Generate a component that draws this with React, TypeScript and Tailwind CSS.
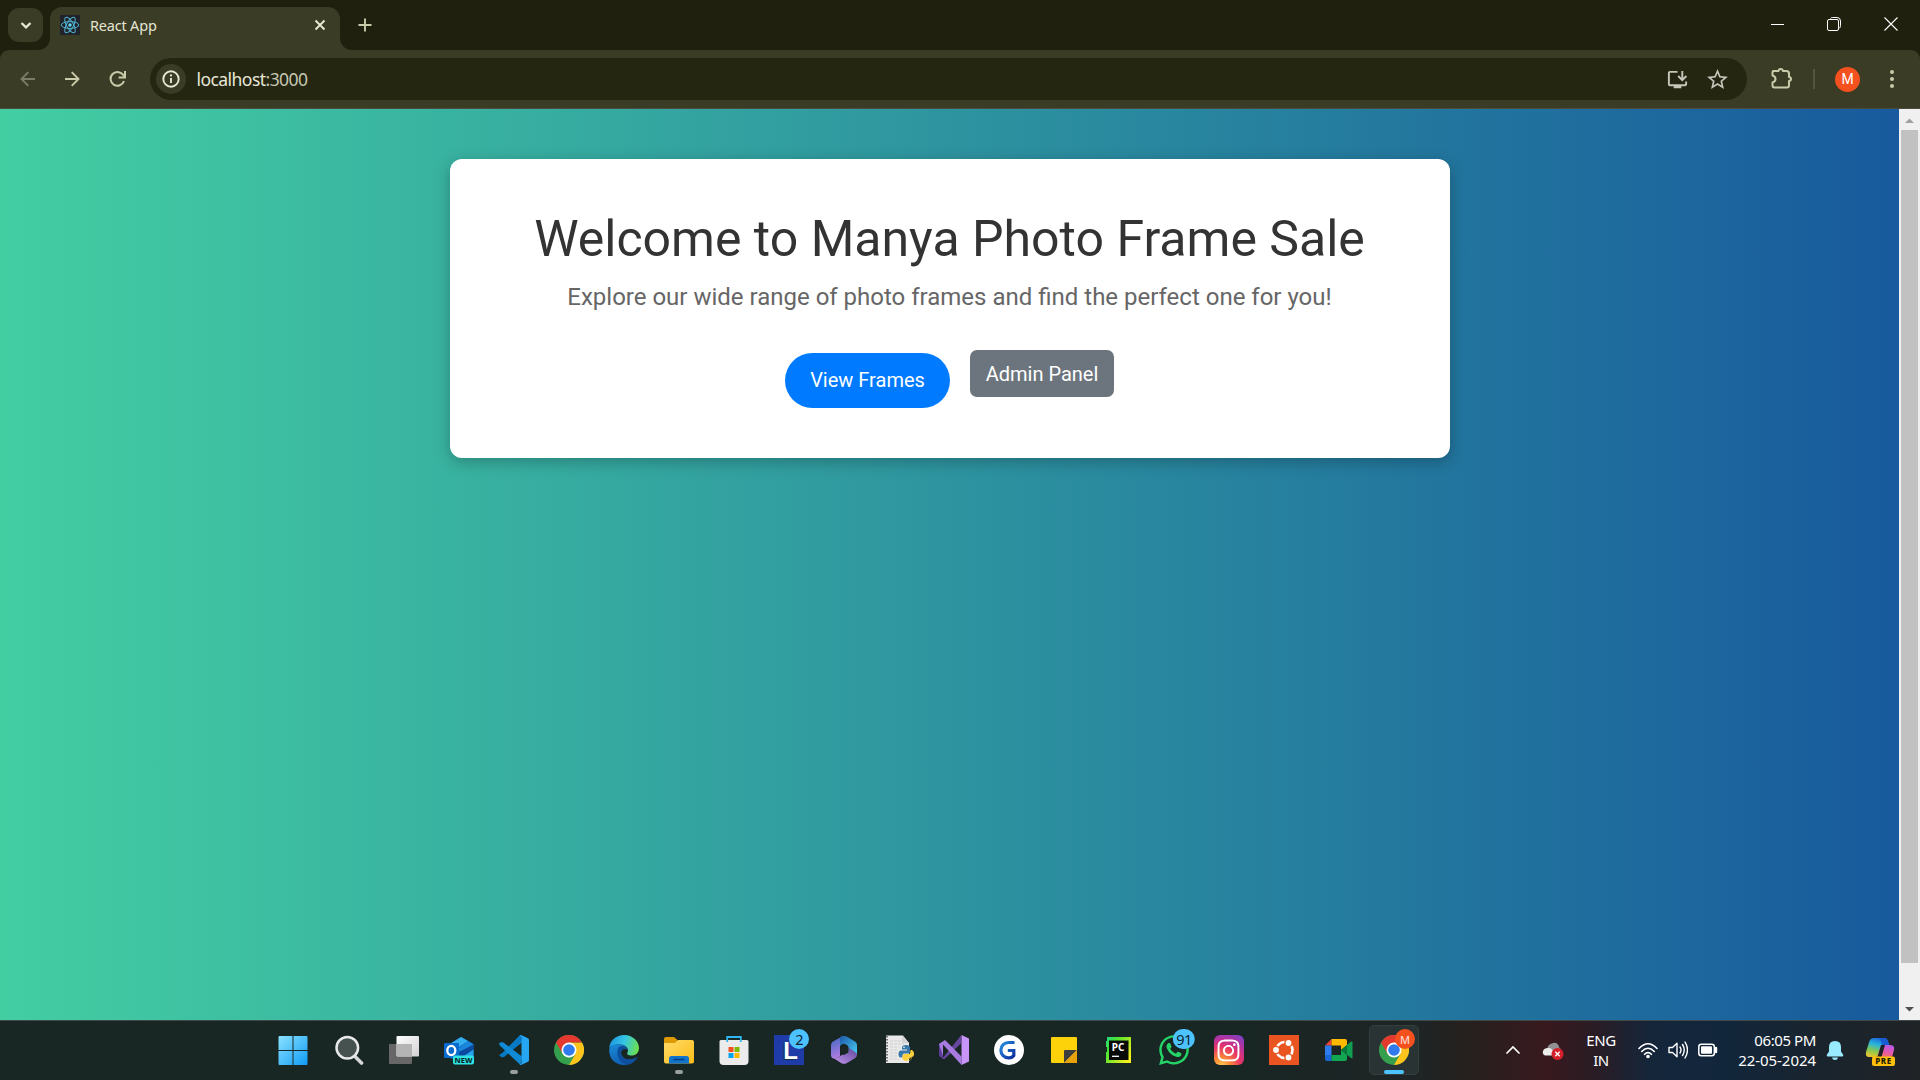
import type { ReactNode } from "react";
import { FaWhatsapp, FaInstagram } from "react-icons/fa";
import { MdOutlineInstallDesktop, MdStarOutline } from "react-icons/md";

const UI = "font-['Noto_Sans','Open_Sans',sans-serif]";

function Svg({ children, size = 30, className = "" }: { children: ReactNode; size?: number; className?: string }) {
  return (
    <svg width={size} height={size} viewBox={`0 0 ${size} ${size}`} fill="none" className={`block shrink-0 ${className}`}>
      {children}
    </svg>
  );
}

function ReactLogo() {
  return (
    <Svg size={20} className="rounded-[1px]">
      <rect width="20" height="20" fill="#20232a" />
      <circle cx="10" cy="10" r="1.7" fill="#61dafb" />
      <g stroke="#4fb3cf" strokeWidth="1">
        <ellipse cx="10" cy="10" rx="8.8" ry="3.4" />
        <ellipse cx="10" cy="10" rx="8.8" ry="3.4" transform="rotate(60 10 10)" />
        <ellipse cx="10" cy="10" rx="8.8" ry="3.4" transform="rotate(120 10 10)" />
      </g>
    </Svg>
  );
}

function TabStrip() {
  return (
    <div className="flex h-[50px] items-start bg-[#1f200e]">
      <div className="mt-2 ml-2 flex h-[34px] w-[35px] items-center justify-center rounded-[11px] bg-[#3b3c26]">
        <Svg size={12}>
          <path d="M1.500 4 L6 8.400 L10.500 4" stroke="#e8e8d6" strokeWidth="2.2" />
        </Svg>
      </div>
      <div className="relative mt-[7px] ml-[7px] flex h-[43px] w-[290px] items-center rounded-t-[12px] bg-[#3b3c26] pr-[14px] pb-[7px] pl-[10px]">
        <svg width="12" height="12" className="absolute bottom-0 -left-3 block"><path d="M12 0 V12 H0 A12 12 0 0 0 12 0Z" fill="#3b3c26" /></svg>
        <svg width="12" height="12" className="absolute -right-3 bottom-0 block"><path d="M0 0 V12 H12 A12 12 0 0 1 0 0Z" fill="#3b3c26" /></svg>
        <ReactLogo />
        <span className={`${UI} mt-[2px] ml-[10px] text-[14.5px] tracking-[-0.2px] text-[#e4e4d3]`}>React App</span>
        <Svg size={12} className="ml-auto">
          <path d="M1.500 1.500 L10.500 10.500 M10.500 1.500 L1.500 10.500" stroke="#e8e8d6" strokeWidth="1.9" />
        </Svg>
      </div>
      <Svg size={14} className="mt-[18px] ml-[18px]">
        <path d="M7 .5 V13.500 M.5 7 H13.500" stroke="#c9cbaa" strokeWidth="1.9" />
      </Svg>
      <div className="mt-[17px] ml-auto flex items-center">
        <Svg size={14}><path d="M0 7.500 H13" stroke="#fff" strokeWidth="1" /></Svg>
        <Svg size={14} className="ml-[42px]">
          <path d="M3.500 1.500 Q4 .5 5.500 .5 H10 Q13.500 .5 13.500 4 V8.500 Q13.500 10.500 12 11.500" stroke="#fff" />
          <rect x=".5" y="2.500" width="11" height="11" rx="1.500" stroke="#fff" />
        </Svg>
        <Svg size={14} className="mr-[22px] ml-[43px]"><path d="M.5 .5 L13.500 13.500 M13.500 .5 L.5 13.500" stroke="#fff" strokeWidth="1.1" /></Svg>
      </div>
    </div>
  );
}

function Toolbar() {
  return (
    <div className="bg-[#1f200e]">
      <div className="flex h-[59px] items-center rounded-t-[9px] border-b border-[#4c4b3d] bg-[#3b3c26]">
        <Svg size={16} className="ml-5"><path d="M15 8 H1.500 M8.300 1.200 L1.500 8 L8.300 14.800" stroke="#7b7c69" strokeWidth="1.9" /></Svg>
        <Svg size={16} className="ml-[28px]"><path d="M1 8 H14.500 M7.700 1.200 L14.500 8 L7.700 14.800" stroke="#c9cbaa" strokeWidth="1.9" /></Svg>
        <Svg size={18} className="ml-[29px]">
          <path d="M15 11 A6.900 6.900 0 1 1 14 4.700 L15.600 6.600" stroke="#c9cbaa" strokeWidth="2" />
          <path d="M16 1 V7.400 H9.600" stroke="#c9cbaa" strokeWidth="2" />
        </Svg>
        <div className="ml-[23px] flex h-[42px] w-[1597px] items-center rounded-full bg-[#252612] pl-[6px]">
          <div className="flex size-[30px] items-center justify-center rounded-full bg-[#3b3c26]">
            <Svg size={18}>
              <circle cx="9" cy="9" r="7.700" stroke="#e8e8d6" strokeWidth="1.900" />
              <path d="M9 8 V13" stroke="#e8e8d6" strokeWidth="1.900" />
              <circle cx="9" cy="5.400" r="1.100" fill="#e8e8d6" />
            </Svg>
          </div>
          <span className={`${UI} mt-px ml-[10.500px] text-[17.5px] tracking-[-0.55px] text-[#e8e8d6]`}>
            localhost<span className="text-[#c6c7b2]">:3000</span>
          </span>
          <MdOutlineInstallDesktop className="ml-auto text-[#c6c6ba]" size={23} />
          <MdStarOutline className="mr-[17px] ml-[16px] text-[#c6c6ba]" size={25} />
        </div>
        <Svg size={24} className="ml-[23px]">
          <path d="M3.500 5 H9 Q9.200 3 11.200 3 Q13.200 3 13.400 5 H17 Q19.500 5 19.500 7.500 V11 Q21.500 11.200 21.500 13 Q21.500 14.800 19.500 15 V19 Q19.500 21.500 17.500 21.500 H5 Q3 21.500 3 19.500 V16.500 Q6 15.700 6 13 Q6 10.500 3 9.500 V6.500 Q3 5 4.500 5Z" stroke="#c9cbaa" strokeWidth="2" strokeLinejoin="round" transform="translate(-.5 -1)" />
        </Svg>
        <div className="ml-[19px] h-[20px] w-[2px] bg-[#55563e]" />
        <div className="ml-[20px] flex size-[25px] items-center justify-center rounded-full bg-[#f4511e] font-[Roboto,sans-serif] text-[14px] text-white">M</div>
        <div className="ml-[30px] flex flex-col gap-[3px]">
          <i className="size-1 rounded-full bg-[#c9cbaa]" />
          <i className="size-1 rounded-full bg-[#c9cbaa]" />
          <i className="size-1 rounded-full bg-[#c9cbaa]" />
        </div>
      </div>
    </div>
  );
}

function Page() {
  return (
    <div className="flex min-h-0 flex-1">
      <main className="flex flex-1 items-start justify-center bg-[linear-gradient(to_right,#43cea2,#185a9d)] pt-[50px] font-[Roboto,sans-serif]">
        <section className="flex h-[299px] w-[1000px] flex-col items-center rounded-[12px] bg-white pt-[50px] shadow-[0_4px_16px_rgba(0,0,0,0.25)]">
          <h1 className="text-[50px] leading-[60px] font-normal whitespace-nowrap text-[#333]">Welcome to Manya Photo Frame Sale</h1>
          <p className="mt-[10px] text-[24px] leading-[36px] whitespace-nowrap text-[#666]">Explore our wide range of photo frames and find the perfect one for you!</p>
          <div className="mt-[35px] flex items-start gap-5 text-[20px] text-white">
            <button className="mt-[3px] h-[55px] w-[165px] rounded-[28px] bg-[#007bff] pb-px whitespace-nowrap">View Frames</button>
            <button className="h-[47px] w-[144px] rounded-[7px] bg-[#6c757d] whitespace-nowrap">Admin Panel</button>
          </div>
        </section>
      </main>
      <div className="flex w-[21px] flex-col items-center bg-[#f0f0f0]">
        <svg width="21" height="21" className="block"><path d="M6 14 L10.500 9.500 L15 14Z" fill="#a0a0a0" /></svg>
        <div className="h-[833px] w-[17px] bg-[#c1c1c1]" />
        <svg width="21" height="21" className="mt-auto block"><path d="M6 8 L10.500 12.500 L15 8Z" fill="#505050" /></svg>
      </div>
    </div>
  );
}

function ChromeIcon() {
  return (
    <Svg>
      <circle cx="15" cy="15" r="15" fill="#34a04d" />
      <path d="M28 7.500 A15 15 0 0 1 15 30 L21.500 18.700 L15 7.500Z" fill="#fcc41c" />
      <path d="M2 7.500 L8.600 18.700 L15 15 V7.500 H28 A15 15 0 0 0 2 7.500" fill="#e5392f" />
      <circle cx="15" cy="15" r="7.500" fill="#fff" />
      <circle cx="15" cy="15" r="5.800" fill="#2f7bee" />
    </Svg>
  );
}

const icons: { name: string; art: ReactNode; badge?: string; running?: boolean; active?: boolean }[] = [
  {
    name: "Start",
    art: (
      <Svg className="relative -left-[1px]">
        <defs><linearGradient id="win" x1="0" y1="0" x2="1" y2="1"><stop stopColor="#8be2ff" /><stop offset="1" stopColor="#0f9bf5" /></linearGradient></defs>
        <path d="M.5 2 Q.5 1 1.500 1 H14.500 V15 H.5Z M15.500 1 H28.500 Q29.500 1 29.500 2 V15 H15.500Z M.5 16 H14.500 V30 H1.500 Q.5 30 .5 29Z M15.500 16 H29.500 V29 Q29.500 30 28.500 30 H15.500Z" fill="url(#win)" />
      </Svg>
    ),
  },
  {
    name: "Search",
    art: (
      <Svg>
        <path d="M20.500 21 L27.500 28" stroke="#d6d8d8" strokeWidth="3.600" strokeLinecap="round" />
        <circle cx="13.300" cy="12.800" r="10.800" fill="#46524f" stroke="#e8eaea" strokeWidth="2.500" />
      </Svg>
    ),
  },
  {
    name: "Task view",
    art: (
      <Svg>
        <defs><linearGradient id="tv" x1="0" y1="0" x2="1" y2="1"><stop stopColor="#fff" /><stop offset="1" stopColor="#d2d2d2" /></linearGradient></defs>
        <rect x="0" y="9" width="23" height="20" rx="1" fill="#676767" />
        <rect x="7.500" y="1" width="22.500" height="20.500" rx="1" fill="url(#tv)" />
        <path d="M7.500 9 H23 V21.500 H8.500 Q7.500 21.500 7.500 20.500Z" fill="#b4b4b4" />
      </Svg>
    ),
  },
  {
    name: "Outlook",
    art: (
      <Svg>
        <path d="M5 9 L17 2 L29.500 9 V24 Q29.500 26 27.500 26 H12 L5 22Z" fill="#0f6cc9" />
        <path d="M6 9 L17 2 L24 6 L12 14Z" fill="#35aef0" />
        <path d="M14 14 L24 6 L29.500 9.500 L18 18Z" fill="#1a86dc" />
        <path d="M15 17 L29.500 9.500 V16 L20 21 H15Z" fill="#0a4a9e" />
        <path d="M20 21 L29.500 14.500 V22Z" fill="#27a4ec" />
        <rect x="0" y="8" width="15" height="15" rx="1" fill="#0a6bcf" />
        <ellipse cx="7.300" cy="15.500" rx="4" ry="4.600" stroke="#fff" strokeWidth="2.300" />
        <rect x="9" y="20.500" width="21" height="9" rx="2" fill="#2ee5e6" />
        <text x="19.500" y="27.900" textAnchor="middle" fontSize="7.500" fontWeight="800" fontFamily="Noto Sans, sans-serif" fill="#06282a">NEW</text>
      </Svg>
    ),
  },
  {
    name: "VS Code",
    running: true,
    art: (
      <Svg>
        <path d="M22 0 L3 19.200 L0 21 L2.500 23.200 L5 23 L23 8.500Z" fill="#0879c4" transform="translate(0 -1)" />
        <path d="M2.500 7.300 Q1.500 7 .3 8.300 V10 L21.500 30 L23 21.500 L4.500 7.500 Z" fill="#118ad6" />
        <path d="M22 0 L29 3.200 Q30 3.800 30 5 V25 Q30 26.200 29 26.800 L22 30 Q20.500 29.500 20.500 29 Q22.500 29.500 22.500 27.500 V2.500 Q22.500 1 20.500 1Z" fill="#26a5f2" />
      </Svg>
    ),
  },
  { name: "Chrome", art: <ChromeIcon /> },
  {
    name: "Edge",
    art: (
      <Svg>
        <defs>
          <linearGradient id="eg" x1="0" y1=".3" x2="1" y2=".5"><stop stopColor="#1c97df" /><stop offset=".5" stopColor="#35c5e4" /><stop offset="1" stopColor="#6be04d" /></linearGradient>
          <linearGradient id="eb" x1="0" y1="0" x2=".4" y2="1"><stop stopColor="#1b8ad8" /><stop offset="1" stopColor="#0f5fb2" /></linearGradient>
        </defs>
        <path d="M.2 13 C1 5 7.500 0 15 0 C24 0 30 6.500 30 13 C30 18 26.500 20.500 22.500 20.500 C19 20.500 17.500 19.500 18.500 17.500 C20.500 14 17 10 11.500 9.500 C6 9 1.500 11 .2 13Z" fill="url(#eg)" />
        <path d="M.2 15 C.2 11 5 9 9.500 9.200 C14.500 9.400 18 12 18.700 15 C16 12.500 12.500 14 12 17.500 C12 23 19 27.500 28.300 22 C26 27 21 30 15 30 C6 30 0 23.500 .2 15Z" fill="url(#eb)" />
        <path d="M10.500 11.500 C7 15 7 25 17 29.800 C22 29.500 26 27 28.300 22 C19 27.500 12 23 12 17.500 C12.500 14 16 12.500 18.700 15 C17.500 11.500 13.500 10 10.500 11.500Z" fill="#0d4f9c" />
      </Svg>
    ),
  },
  {
    name: "File Explorer",
    running: true,
    art: (
      <Svg>
        <defs><linearGradient id="fe" x1="0" y1="0" x2="1" y2="1"><stop stopColor="#ffda68" /><stop offset="1" stopColor="#fcbd17" /></linearGradient></defs>
        <path d="M0 4 Q0 2 2 2 H10 L13.500 5 V9 H0Z" fill="#dd9a05" />
        <path d="M0 8 H11 L14 5 H28 Q30 5 30 7 V26.500 Q30 28.500 28 28.500 H2 Q0 28.500 0 26.500Z" fill="url(#fe)" />
        <path d="M5 28.500 V23.500 Q5 21 7.500 21 H22.500 Q25 21 25 23.500 V28.500Z" fill="#1173cb" />
        <path d="M10 24.500 H20" stroke="#053e7d" strokeWidth="1.400" strokeLinecap="round" />
      </Svg>
    ),
  },
  {
    name: "Store",
    art: (
      <Svg>
        <path d="M.5 6.500 Q.5 5 2 5 H28 Q29.500 5 29.500 6.500 V26 Q29.500 30 25.500 30 H4.500 Q.5 30 .5 26Z" fill="#ebebeb" />
        <path d="M8.200 7 V2 H21.800 V7" stroke="#2fb5ef" strokeWidth="1.800" />
        <path d="M9.500 12 H14.500 V17 H9.500Z" fill="#f25022" /><path d="M15.500 12 H20.500 V17 H15.500Z" fill="#7fba00" />
        <path d="M9.500 18 H14.500 V23 H9.500Z" fill="#00a4ef" /><path d="M15.500 18 H20.500 V23 H15.500Z" fill="#ffb900" />
      </Svg>
    ),
  },
  {
    name: "L",
    badge: "2",
    art: (
      <div className="flex size-[30px] items-center justify-center bg-[#1e3ba8] pt-[2px] font-['Liberation_Sans',sans-serif] text-[24px] leading-none font-bold text-white [text-shadow:-1px_1px_0_#12324f]">
        <span className="relative left-[2px]">L</span>
      </div>
    ),
  },
  {
    name: "Microsoft 365",
    art: (
      <Svg>
        <defs>
          <linearGradient id="m1" x1="0" y1="0" x2=".3" y2="1"><stop stopColor="#3c6ac4" /><stop offset="1" stopColor="#b07be0" /></linearGradient>
          <linearGradient id="m2" x1="0" y1="0" x2="1" y2="1"><stop stopColor="#1b5aa8" /><stop offset="1" stopColor="#4bd0f7" /></linearGradient>
          <linearGradient id="m3" x1="0" y1="1" x2="1" y2="0"><stop stopColor="#c79af2" /><stop offset="1" stopColor="#5d4597" /></linearGradient>
        </defs>
        <path d="M13 1.500 L4 6.500 Q2 7.700 2 10 V20 Q2 23 4.500 23.500 Q7 24 9.500 22 L11 21 V11 Q11 9 13 8 L17 1.500Z" fill="url(#m1)" />
        <path d="M11 2 Q15 0 18.500 2 L26 6.500 Q28 7.700 28 10 V19 Q27 21 24 21 L19.500 18.500 V12 Q19 10 17 9.500 Q14 7.500 11 11Z" fill="url(#m2)" />
        <path d="M3.500 22.500 Q7 24.500 11 21 L19 17 Q20 16 20 13 L26 17 Q28 18 28 20 Q28 22 26 23.200 L17.500 28.200 Q15 29.500 12.500 28.200Z" fill="url(#m3)" />
        <path d="M15 10.500 L19.300 13 V17.500 L15 20 L11 17.500 V13Z" fill="#1a2725" />
      </Svg>
    ),
  },
  {
    name: "Python",
    art: (
      <Svg>
        <path d="M2 .5 H19 L25 8 V28 H2Z" fill="#e9e9e9" />
        <path d="M3 1 V28" stroke="#777" strokeWidth="2" strokeDasharray="1.500 1.500" />
        <path d="M6 6 H17 M6 9 H20 M6 12 H15 M6 15 H14 M6 18 H14 M6 21 H14 M6 24 H15" stroke="#cfcfcf" strokeWidth="1" strokeDasharray="3 1" />
        <path d="M18 .5 V8 H25Z" fill="#d4d4d4" />
        <path d="M22 10 Q18 10 18 12.500 V14.500 H23 V15.500 H17 Q14.500 15.500 14.500 19 Q14.500 22.500 17 22.500 H18.500 V20.500 Q18.500 18.500 20.500 18.500 H24.500 Q26 18.500 26 16.500 V12.500 Q26 10 22 10Z" fill="#3a78aa" />
        <path d="M23 25.500 Q27 25.500 27 23.500 V21.500 H22 V20.500 Q26.500 20.500 26.500 15.500 H27.500 Q30 15.500 30 19 Q30 22 27.500 22 V23.500 Q27 26 23 26 Q18.500 26 18.500 23 V21 Q18.500 19 21 19 H25 Q26.700 19 26.700 15 H28 Q30 16 29.500 19.500 Q29 22 27.500 22Z" fill="#ffd03e" />
        <circle cx="20" cy="12.300" r=".8" fill="#fff" />
      </Svg>
    ),
  },
  {
    name: "Visual Studio",
    art: (
      <Svg>
        <path d="M0 9 L4 6.700 V23.500 L0 21Z" fill="#5b3c99" />
        <path d="M3 24 L22 .5 V8.500 L5.500 24Z" fill="#67469f" />
        <path d="M0 9 L6 5 L22.500 21.500 V30 L4 9.500 V21Z" fill="#a87be0" />
        <path d="M22.500 0 L30 3.500 V26.500 L22.500 30Z" fill="#c994f8" />
      </Svg>
    ),
  },
  {
    name: "G",
    art: (
      <Svg>
        <defs><linearGradient id="gg" x1="0" y1="0" x2="1" y2="1"><stop stopColor="#258ee0" /><stop offset="1" stopColor="#0c2a9c" /></linearGradient></defs>
        <circle cx="15" cy="15" r="15" fill="#fff" />
        <path d="M20.500 7.500 H14.500 A7.400 7.400 0 0 0 14.500 22.800 Q18 23 19.800 20.500 V15.500 H13.800" stroke="url(#gg)" strokeWidth="3.200" />
      </Svg>
    ),
  },
  {
    name: "Sticky Notes",
    art: (
      <Svg>
        <path d="M2 3 Q2 2 3 2 H27 Q28 2 28 3 V28 H3 Q2 28 2 27Z" fill="#fdd20a" />
        <path d="M15 28 V16 Q15 15 16 15 H28Z" fill="#3e3e3e" />
        <path d="M28 15 V28 H15Z" fill="#e8a30c" />
      </Svg>
    ),
  },
  {
    name: "PyCharm",
    art: (
      <Svg>
        <defs><linearGradient id="pc" x1="0" y1="0" x2="1" y2=".7"><stop stopColor="#21d789" /><stop offset=".3" stopColor="#48e432" /><stop offset="1" stopColor="#f5f01e" /></linearGradient></defs>
        <path d="M3 2 H27 V28 H2 V17 H3 V12 H2 V6 H3Z" fill="url(#pc)" />
        <rect x="5" y="5.500" width="19.500" height="19.500" fill="#070a08" />
        <text x="14" y="15.500" textAnchor="middle" fontSize="10" fontWeight="700" fontFamily="Noto Sans, sans-serif" fill="#fff">PC</text>
        <path d="M8 21.300 H15" stroke="#fff" strokeWidth="1.300" />
      </Svg>
    ),
  },
  { name: "WhatsApp", badge: "91", art: <FaWhatsapp size={34} color="#25d366" className="shrink-0" /> },
  {
    name: "Instagram",
    art: (
      <div className="flex size-[30px] items-center justify-center rounded-[6px] bg-[radial-gradient(circle_at_25%_105%,#ffd35a_0%,#fb8b35_22%,#e93466_50%,#b6319d_72%,#6d46d4_100%)]">
        <FaInstagram size={25} color="#fff" />
      </div>
    ),
  },
  {
    name: "Ubuntu",
    art: (
      <Svg>
        <rect width="30" height="30" fill="#e95420" />
        <circle cx="15.500" cy="15" r="8" stroke="#fff" strokeWidth="2.600" />
        <g fill="#fff" stroke="#e95420" strokeWidth="1.400">
          <circle cx="7" cy="15" r="3.600" /><circle cx="19.500" cy="8" r="3.600" /><circle cx="19.500" cy="22.500" r="3.600" />
        </g>
      </Svg>
    ),
  },
  {
    name: "Meet",
    art: (
      <Svg>
        <path d="M1 10.500 L7.500 4 V10.500Z" fill="#ea4335" /><path d="M1 10.500 H7.500 V20 H1Z" fill="#2c7cf0" />
        <path d="M1 20 H7.500 V26 H3 Q1 26 1 24Z" fill="#1967d2" />
        <path d="M7.500 4 H21 Q23 4 23 6 V10 L17 15 V10.500 H7.500Z" fill="#ffba00" />
        <path d="M7.500 20 H17 V15 L23 20 V24 Q23 26 21 26 H7.500Z" fill="#12a653" />
        <path d="M17 15 L27 6.500 Q28.500 6 28.500 7.500 V22.500 Q28.500 24 27 23Z" fill="#109d50" />
        <path d="M17 15 L23 10 V20Z" fill="#08783a" />
      </Svg>
    ),
  },
  { name: "Chrome profile", active: true, art: <ChromeIcon /> },
];

function Taskbar() {
  return (
    <div className={`flex h-[60px] shrink-0 items-start border-t border-[#3d4a49] bg-[linear-gradient(90deg,#192724_0%,#182624_65%,#1f2425_74%,#24211f_76%,#38191e_80.5%,#2a1c24_83%,#15263b_86%,#12263b_90%,#1a242d_95%,#202326_100%)] text-white ${UI}`}>
      <div className="ml-[266px] flex">
        {icons.map((icon) => (
          <div key={icon.name} className="relative flex h-[58px] w-[55px] items-center justify-center">
            {icon.active ? (
              <div className="absolute top-[4px] left-[3px] h-[50px] w-[50px] rounded-[5px] border border-[#353e3f] bg-[#2a3334]" />
            ) : null}
            <div className="relative flex size-[30px] items-center justify-center">{icon.art}</div>
            {icon.badge ? (
              <div className="absolute top-[8px] left-[38px] flex h-[20px] min-w-[20px] -translate-x-1/2 items-center justify-center rounded-full bg-[#4cc2ff] px-[3.500px] text-[14.500px] leading-none tracking-[-0.6px] text-[#0c2431]">{icon.badge}</div>
            ) : null}
            {icon.active ? (
              <div className="absolute top-[8px] left-[29px] flex size-[20px] items-center justify-center rounded-full bg-[#f4511e] text-[11px] leading-none font-medium text-[#ffd9cc]">M</div>
            ) : null}
            {icon.running ? <div className="absolute top-[49px] left-[24px] h-[4px] w-[8px] rounded-full bg-[#9a9f9e]" /> : null}
            {icon.active ? <div className="absolute top-[49px] left-[18px] h-[4px] w-[20px] rounded-full bg-[#4cc2ff]" /> : null}
          </div>
        ))}
      </div>
      <div className="flex h-[58px] flex-1 items-center">
        <Svg size={14} className="ml-[85px]"><path d="M1 10 L7 4 L13 10" stroke="#fff" strokeWidth="1.700" strokeLinecap="round" /></Svg>
        <Svg size={22} className="ml-[22px]">
          <path d="M5 12 Q5 5 11 4 Q16 3 17.500 9 Q20 10 19 14 H5Z" fill="#929092" />
          <path d="M3 16.500 Q0 15 1 12 Q2 9 6 9 Q11 8 12.500 16.500Z" fill="#ececec" />
          <circle cx="15.500" cy="15" r="6" fill="#d5202c" />
          <path d="M13.300 12.800 L17.700 17.200 M17.700 12.800 L13.300 17.200" stroke="#fff" strokeWidth="1.300" />
        </Svg>
        <div className="ml-[15px] w-[44px] text-center text-[15px] leading-[20px] tracking-[-0.4px]">ENG<br />IN</div>
        <Svg size={20} className="ml-[15px]">
          <g stroke="#fff" strokeWidth="1.600" strokeLinecap="round">
            <path d="M1 8.500 Q10 -1 19 8.500" /><path d="M3.700 11.500 Q10 5 16.300 11.500" /><path d="M6.500 14.300 Q10 11 13.500 14.300" />
          </g>
          <circle cx="10" cy="16.500" r="1.800" fill="#fff" />
        </Svg>
        <Svg size={20} className="ml-[10px]">
          <path d="M1 7.500 H4.500 L9 3.200 V16.800 L4.500 12.500 H1Z" stroke="#fff" strokeWidth="1.400" strokeLinejoin="round" />
          <path d="M12 7 Q14 10 12 13 M14.500 4.500 Q18 10 14.500 15.500 M17 2 Q22 10 17 18" stroke="#fff" strokeWidth="1.400" strokeLinecap="round" />
        </Svg>
        <Svg size={20} className="ml-[10px]">
          <rect x=".8" y="4.200" width="15.500" height="11.600" rx="2.500" stroke="#fff" strokeWidth="1.500" />
          <rect x="3" y="6.300" width="11" height="7.500" rx="1" fill="#fff" /><path d="M18 8 V12" stroke="#fff" strokeWidth="2.400" strokeLinecap="round" />
        </Svg>
        <div className="ml-[16px] w-[82px] text-right text-[15px] leading-[20px] whitespace-nowrap">
          <div className="tracking-[-0.4px]">06:05 PM</div>
          <div className="tracking-[-0.05px]">22-05-2024</div>
        </div>
        <Svg size={20} className="ml-[9px]">
          <path d="M10 1 Q16 1 16 7 V11.500 L18.300 15 Q18.500 16.500 17 16.500 H3 Q1.500 16.500 1.700 15 L4 11.500 V7 Q4 1 10 1Z" fill="#99ebff" />
          <path d="M7 17.500 H13 Q12.500 20 10 20 Q7.500 20 7 17.500Z" fill="#99ebff" />
        </Svg>
        <Svg size={30} className="mt-[2px] ml-[20px]">
          <defs>
            <linearGradient id="cp1" x1=".6" y1="0" x2=".3" y2="1"><stop stopColor="#1b60dd" /><stop offset=".35" stopColor="#28b5dc" /><stop offset=".7" stopColor="#89c84b" /><stop offset="1" stopColor="#eac431" /></linearGradient>
            <linearGradient id="cp2" x1=".7" y1="0" x2=".3" y2="1"><stop stopColor="#b75ae8" /><stop offset=".6" stopColor="#eb5aa5" /><stop offset="1" stopColor="#f8795b" /></linearGradient>
          </defs>
          <path d="M9 2 H19 Q22 2 23 5 L24 9 H19 Q17 9 16 12 L13.500 19 Q12.500 21 10 21 H4 Q0 21 1 16 L4.500 5 Q5.500 2 9 2Z" fill="url(#cp1)" />
          <path d="M12 21 L16 9 H25 Q30 9 29 14 L27 21Z" fill="url(#cp2)" />
          <path d="M16 9 H20 L16.500 21 H12.500Z" fill="#1d2227" />
          <path d="M15 2 H19 Q22 2 23 5 L24 9 H17Z" fill="#195bd0" />
          <rect x="7" y="20.500" width="23" height="9.500" rx="2" fill="#fdc00b" />
          <text x="18.500" y="28.200" textAnchor="middle" fontSize="8" fontWeight="800" letterSpacing=".5" fontFamily="Noto Sans, sans-serif" fill="#221b00">PRE</text>
        </Svg>
      </div>
    </div>
  );
}

export default function App() {
  return (
    <div className="flex h-[1080px] w-[1920px] flex-col overflow-hidden">
      <TabStrip />
      <Toolbar />
      <Page />
      <Taskbar />
    </div>
  );
}
